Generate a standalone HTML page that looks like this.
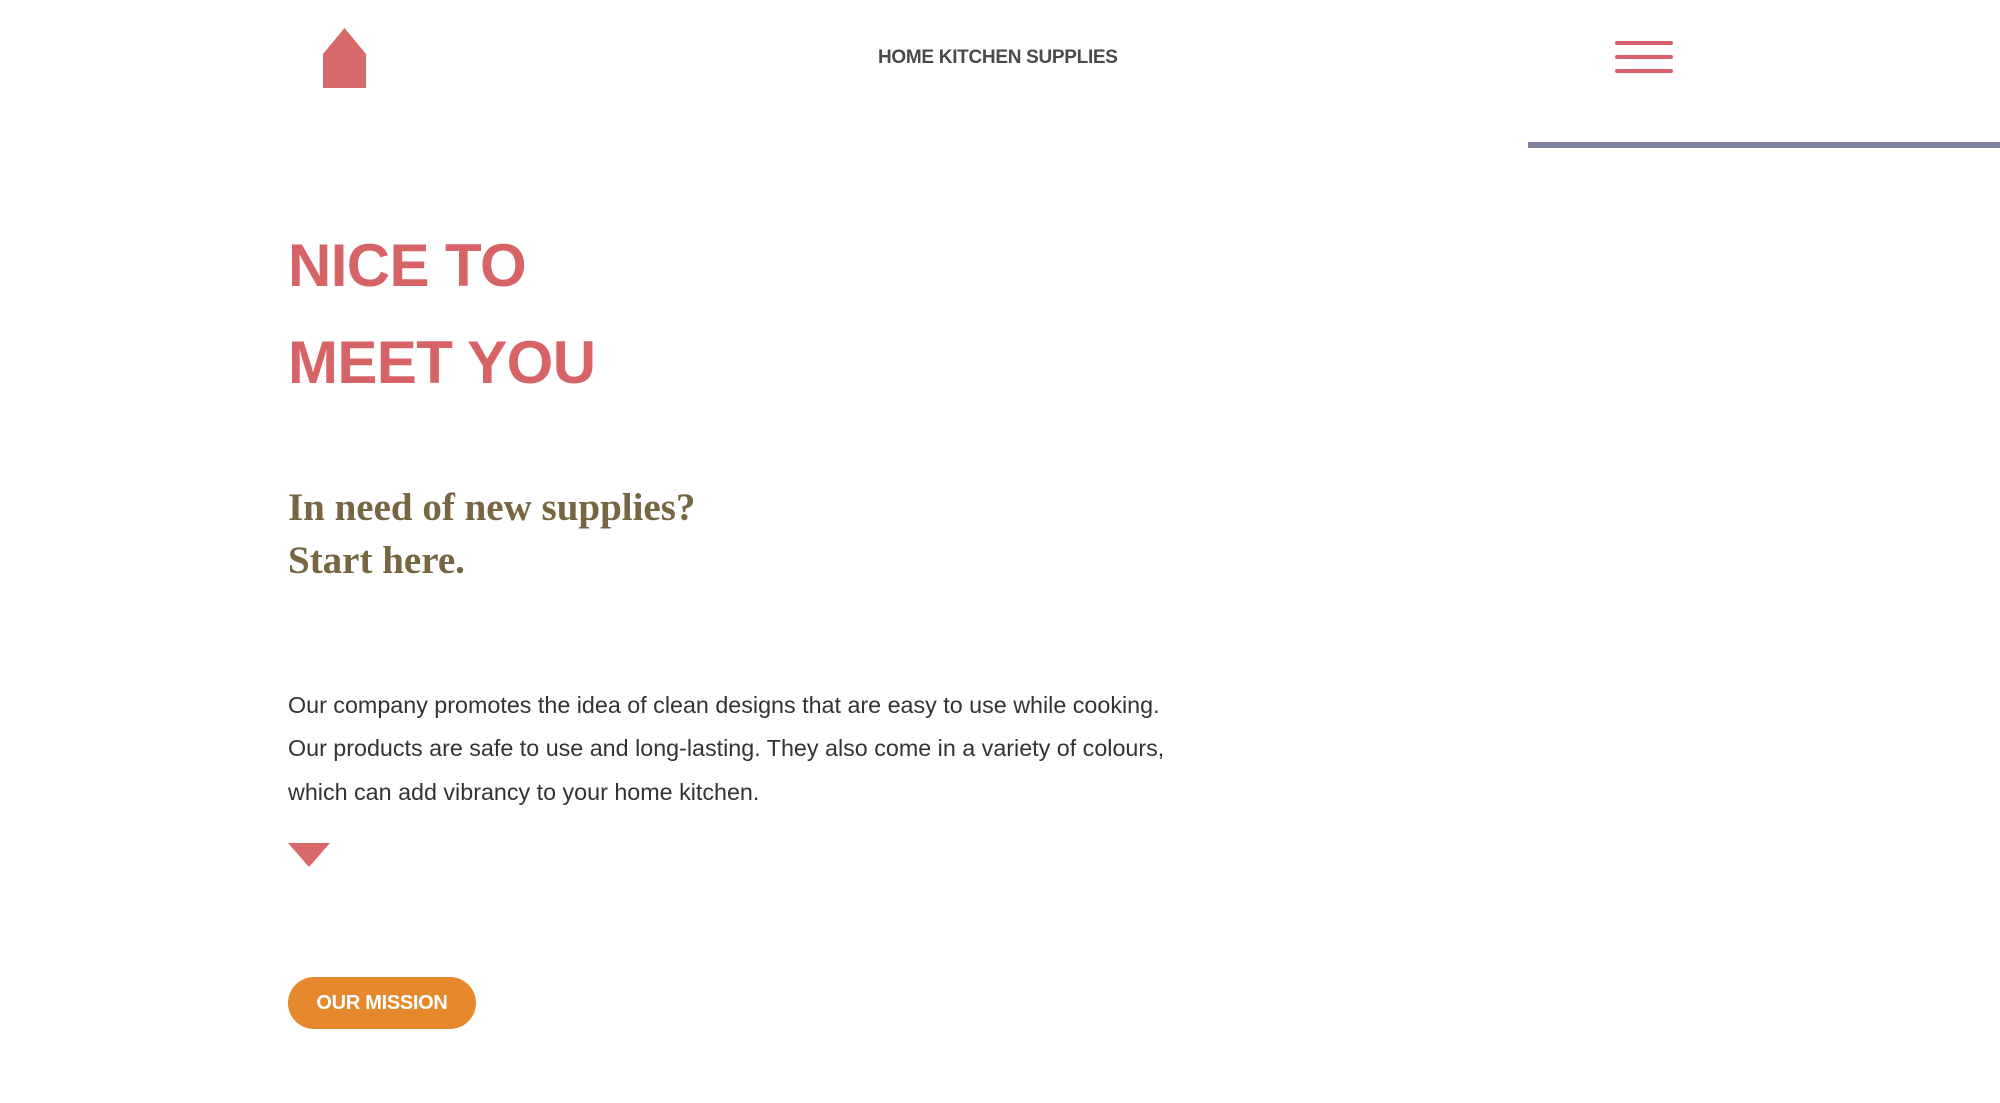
<!DOCTYPE html>
<html><head><meta charset="utf-8"><style>
html,body{margin:0;padding:0;background:#fff;width:2000px;height:1103px;overflow:hidden;position:relative;font-family:"Liberation Sans",sans-serif}
.a{position:absolute;white-space:nowrap}
.h1{color:#d66467;font-weight:bold;font-size:60px;letter-spacing:-0.6px;line-height:1}
.sub{color:#766642;font-family:"Liberation Serif",serif;font-weight:bold;font-size:39px;letter-spacing:0px;line-height:1}
.p{color:#333;font-size:23.3px;letter-spacing:0px;line-height:1}
</style></head><body>
<svg class="a" style="left:323px;top:28px" width="43" height="60" viewBox="0 0 43 60"><path d="M21.5 0 L43 26 L43 60 L0 60 L0 26 Z" fill="#d8696b"/></svg>
<div class="a" style="left:878px;top:48px;font-size:19px;font-weight:bold;color:#4a4a4a;letter-spacing:-0.3px;line-height:1">HOME KITCHEN SUPPLIES</div>
<div class="a" style="left:1615px;top:41px;width:58px;height:4px;background:#d6606a;border-radius:2px"></div>
<div class="a" style="left:1615px;top:55px;width:58px;height:4px;background:#d6606a;border-radius:2px"></div>
<div class="a" style="left:1615px;top:69px;width:58px;height:4px;background:#d6606a;border-radius:2px"></div>
<div class="a" style="left:1528px;top:142px;width:472px;height:6px;background:#7f80a2"></div>
<div class="a h1" style="left:288px;top:236px">NICE TO</div>
<div class="a h1" style="left:288px;top:333px">MEET YOU</div>
<div class="a sub" style="left:288px;top:488px">In need of new supplies?</div>
<div class="a sub" style="left:288px;top:541px">Start here.</div>
<div class="a p" style="left:288px;top:694px">Our company promotes the idea of clean designs that are easy to use while cooking.</div>
<div class="a p" style="left:288px;top:737px">Our products are safe to use and long-lasting. They also come in a variety of colours,</div>
<div class="a p" style="left:288px;top:781px">which can add vibrancy to your home kitchen.</div>
<svg class="a" style="left:288px;top:843px" width="42" height="24" viewBox="0 0 42 24"><path d="M0 0 L42 0 L21 24 Z" fill="#d8696b"/></svg>
<div class="a" style="left:288px;top:977px;width:188px;height:52px;border-radius:26px;background:#e6892c;color:#fff;font-weight:bold;font-size:20px;line-height:52px;text-align:center;letter-spacing:-0.3px">OUR MISSION</div>
</body></html>
